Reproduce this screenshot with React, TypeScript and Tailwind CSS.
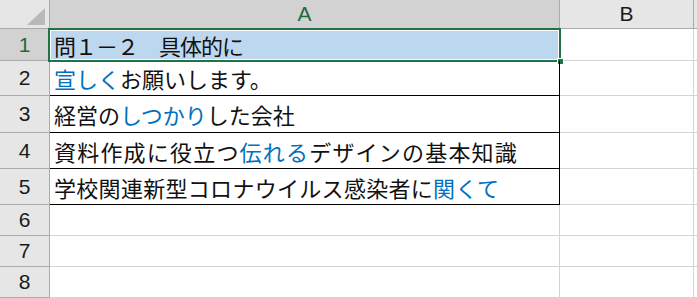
const jp = "font-['Noto_Sans_CJK_JP','Noto_Sans',sans-serif]";
const ui = "font-['Liberation_Sans','Noto_Sans',sans-serif]";

type Part = { t: string; blue?: boolean };

const rows: { h: string; track?: string; parts: Part[] }[] = [
  { h: 'h-[32px]', track: 'tracking-[-1px]', parts: [{ t: '問１－２　具体的に' }] },
  { h: 'h-[35px]', parts: [{ t: '宣しく', blue: true }, { t: 'お願いします。' }] },
  { h: 'h-[37px]', parts: [{ t: '経営の' }, { t: 'しつかり', blue: true }, { t: 'した会社' }] },
  {
    h: 'h-[36px]',
    track: 'tracking-[1.2px]',
    parts: [{ t: '資料作成に役立つ' }, { t: '伝れる', blue: true }, { t: 'デザインの基本知識' }],
  },
  {
    h: 'h-[36px]',
    track: 'tracking-[0.3px]',
    parts: [{ t: '学校関連新型コロナウイルス感染者に' }, { t: '関くて', blue: true }],
  },
  { h: 'h-[31px]', parts: [] },
  { h: 'h-[31px]', parts: [] },
  { h: 'h-[31px]', parts: [] },
];

const App = () => {
  return (
    <div className="w-[697px] h-[298px] overflow-hidden bg-white">
      {/* column headers */}
      <div className="flex h-[29px]">
        <div className="relative w-[50px] shrink-0 border-r border-b border-[#ababab] bg-[#e6e6e6]">
          <svg className="absolute left-0 top-0" width="50" height="29" viewBox="0 0 50 29">
            <polygon points="45,8 45,25 27,25" fill="#b9b9b9" />
          </svg>
        </div>
        <div
          className={`flex w-[510px] shrink-0 items-center justify-center border-r border-b border-[#ababab] bg-[#d2d2d2] text-[21px] text-[#1e6b40] ${ui}`}
        >
          A
        </div>
        <div
          className={`flex w-[134px] shrink-0 items-center justify-center border-r border-b border-[#ababab] bg-[#e6e6e6] text-[21px] text-[#1a1a1a] ${ui}`}
        >
          B
        </div>
        <div className="flex-1 border-b border-[#ababab] bg-[#e6e6e6]" />
      </div>

      {rows.map((row, i) => {
        const n = i + 1;
        const selected = n === 1;
        const boxed = n <= 5;
        return (
          <div key={n} className={`flex ${row.h}`}>
            <div
              className={`flex w-[50px] shrink-0 items-center justify-center border-r border-b border-[#ababab] text-[21px] ${ui} ${
                selected ? 'bg-[#d2d2d2] text-[#1e6b40]' : 'bg-[#e6e6e6] text-[#1a1a1a]'
              }`}
            >
              {n}
            </div>
            <div
              className={`relative flex w-[510px] shrink-0 items-center border-r border-b pl-[4px] text-[22px] leading-none whitespace-nowrap text-[#111] ${jp} ${
                row.track ?? ''
              } ${boxed ? 'border-black' : 'border-[#d4d4d4]'} ${selected ? 'bg-[#bdd7ee]' : ''}`}
            >
              {row.parts.map((p, j) => (
                <span key={j} className={p.blue ? 'text-[#0070c0]' : ''}>
                  {p.t}
                </span>
              ))}
              {selected && (
                <div className="pointer-events-none absolute -top-[1px] -left-[2px] -right-[2px] -bottom-[2px] border-2 border-[#217346]">
                  <div className="absolute inset-0 border border-white" />
                  <div className="absolute -right-[5px] -bottom-[5px] h-[7px] w-[7px] border border-white bg-[#217346]" />
                </div>
              )}
            </div>
            <div className="w-[134px] shrink-0 border-r border-b border-[#d4d4d4]" />
            <div className="flex-1 border-b border-[#d4d4d4]" />
          </div>
        );
      })}
    </div>
  );
};

export default App;
